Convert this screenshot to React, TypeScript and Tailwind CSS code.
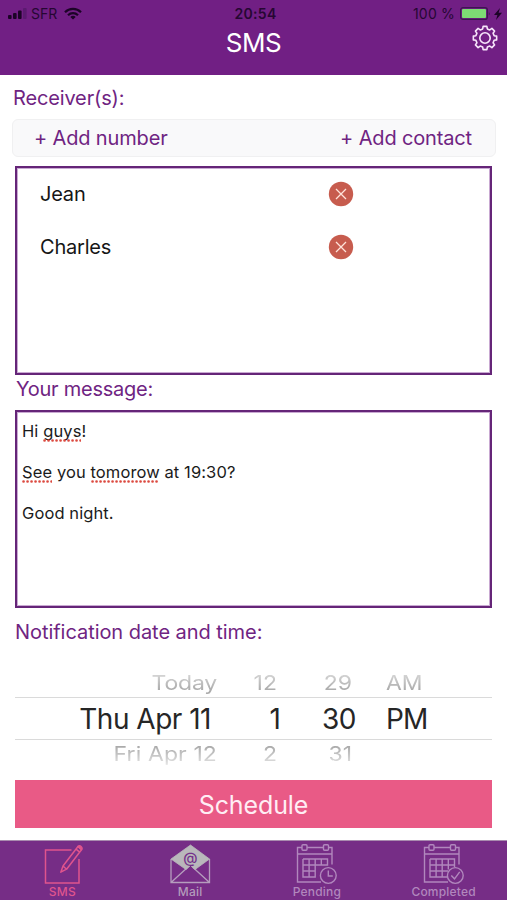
import React from "react";

const contacts = ["Jean", "Charles"];

const GearIcon = () => {
  // eight teeth, each one a flat top joined by slanted flanks
  const points: string[] = [];
  for (let i = 0; i < 8; i++) {
    const mid = (i * Math.PI) / 4;
    [
      [-0.25, 9.4],
      [-0.16, 11.8],
      [0.16, 11.8],
      [0.25, 9.4],
    ].forEach(([offset, r]) => {
      const x = 13 + r * Math.sin(mid + offset);
      const y = 13 - r * Math.cos(mid + offset);
      points.push(`${x.toFixed(2)},${y.toFixed(2)}`);
    });
  }
  return (
    <svg width="26" height="26" viewBox="0 0 26 26" fill="none" stroke="#f7e6fb" strokeWidth="1.6" strokeLinejoin="round">
      <polygon points={points.join(" ")} />
      <circle cx="13" cy="13" r="5.2" />
    </svg>
  );
};

const StatusBar = () => (
  <div className="grid grid-cols-3 items-center h-[27px] pl-[8px] pr-[5px] text-[14px] text-[#260733]">
    <div className="flex items-center">
      <svg width="19" height="11" viewBox="0 0 19 11" fill="#1c0427">
        <rect x="0" y="7" width="3.6" height="4" rx="1" />
        <rect x="5" y="5" width="3.6" height="6" rx="1" />
        <rect x="10" y="2.5" width="3.6" height="8.5" rx="1" />
        <rect x="15" y="0" width="3.6" height="11" rx="1" fill="#5b1a70" />
      </svg>
      <span className="ml-[4px]">SFR</span>
      <svg className="ml-[7px]" width="18" height="13" viewBox="0 0 18 13" fill="none" stroke="#1c0427" strokeWidth="2.2">
        <path d="M1 5.2C5.4.7 12.6.7 17 5.2" />
        <path d="M4 8.3c2.8-2.8 7.2-2.8 10 0" />
        <path d="M9 12.6 6.3 9.9c1.5-1.4 3.9-1.4 5.4 0z" fill="#1c0427" stroke="none" />
      </svg>
    </div>
    <div className="text-center font-semibold text-[14px] tracking-[0.3px] pl-[1px]">20:54</div>
    <div className="flex items-center justify-end">
      <span className="tracking-[0.2px]">100 %</span>
      <svg className="ml-[5px]" width="31" height="13" viewBox="0 0 31 13">
        <rect x="0.6" y="0.6" width="26.8" height="11.8" rx="2.5" fill="none" stroke="#3d1550" strokeWidth="1.2" />
        <rect x="2" y="2" width="24" height="9" rx="1" fill="#7ddb74" />
        <path d="M28.8 4.5q1.6 2 0 4z" fill="#3d1550" />
      </svg>
      <svg className="ml-[3px]" width="8" height="12" viewBox="0 0 8 12" fill="#1c0427">
        <path d="M6 0 0 7h3.4L2 12l6-7.2H4.6z" />
      </svg>
    </div>
  </div>
);

const Header = () => (
  <header className="relative h-[75px] bg-[#711f84]">
    <StatusBar />
    <h1 className="text-center text-[26px] leading-[32px] text-white tracking-[-0.4px]">SMS</h1>
    <button className="absolute right-[9px] top-[25px]"><GearIcon /></button>
  </header>
);

const DeleteButton = () => (
  <button>
    <svg width="26" height="26" viewBox="0 0 26 26">
      <circle cx="13" cy="13" r="12.2" fill="#c75c4e" />
      <path d="M8 8l10 10M18 8 8 18" stroke="#ffe3da" strokeWidth="1.3" fill="none" />
    </svg>
  </button>
);

// Word flagged by the spell checker
const Misspelled = ({ children }: { children: React.ReactNode }) => (
  <span className="relative">
    {children}
    <svg className="absolute left-0 bottom-[-1px] w-full h-[3px]">
      <line x1="1.5" y1="1.5" x2="100%" y2="1.5" stroke="#dc4a40" strokeWidth="2.6" strokeLinecap="round" strokeDasharray="0.1 3.9" />
    </svg>
  </span>
);

const DatePicker = () => (
  <div className="mx-[15px] mt-[23px] h-[99px] overflow-hidden">
    <div className="grid grid-cols-[202px_60px_75px_1fr] h-[29px] items-center text-[23px] leading-[26px] text-[#acacac] [mask-image:linear-gradient(to_bottom,#0006_10%,#000_75%)]">
      <span className="text-right tracking-[-0.2px] scale-y-[0.87]">Today</span>
      <span className="text-right scale-y-[0.87]">12</span>
      <span className="text-right scale-y-[0.87]">29</span>
      <span className="pl-[34px] scale-y-[0.87]">AM</span>
    </div>
    <div className="grid grid-cols-[196px_70px_75px_1fr] h-[43px] items-center border-y border-[#dadada] text-[28px] text-[#262626]">
      <span className="text-right tracking-[-0.5px]">Thu Apr 11</span>
      <span className="text-right">1</span>
      <span className="text-right tracking-[-0.5px]">30</span>
      <span className="pl-[30px] tracking-[-0.8px]">PM</span>
    </div>
    <div className="grid grid-cols-[202px_60px_75px_1fr] h-[27px] items-center text-[23px] leading-[26px] text-[#a8a8a8] [mask-image:linear-gradient(to_bottom,#000_20%,#0005_90%)]">
      <span className="text-right tracking-[0.1px] scale-y-[0.87]">Fri Apr 12</span>
      <span className="text-right scale-y-[0.87]">2</span>
      <span className="text-right scale-y-[0.87]">31</span>
    </div>
  </div>
);

const SmsIcon = () => (
  <svg width="42" height="42" viewBox="0 0 42 42" fill="none" stroke="currentColor" strokeWidth="1.5">
    <path d="M30.5 7H4.5v33H38V16" />
    <path d="M37 3.5 22 23l-2.2 6.2 5.8-3L40.500 6.700zM35 6.200l3.700 3M22 23l3.600 3.200" strokeLinejoin="round" />
    <path d="M37 3.5c1.500-2 5.500 1 3.500 3.200z" fill="currentColor" />
  </svg>
);

const MailIcon = () => (
  <svg width="42" height="42" viewBox="0 0 42 42" fill="none" stroke="#b59dbd" strokeWidth="1.3">
    <path d="M2 16v23.500h38.500V16M2 39.500l17-15.500M40.500 39.500 23.500 24" />
    <path d="M21.500 2 2 16l15 10.500 4.500-4 4.500 4L40.500 16z" fill="#b9b7bb" stroke="#b9b7bb" strokeWidth="0.8" strokeLinejoin="round" />
    <text x="21.3" y="19.500" textAnchor="middle" fontSize="14.5" fontWeight="500" fill="#74308a" stroke="none">@</text>
  </svg>
);

const CalendarIcon = ({ done = false }: { done?: boolean }) => (
  <svg width="42" height="42" viewBox="0 0 42 42" fill="none" stroke="#b187bd" strokeWidth="1.4">
    <path d="M6 4.500H1.500V39H25M11 4.500h16.500M32.500 4.500H36v17M1.500 11H36" />
    <rect x="6" y="1.700" width="5" height="5.500" rx="1" />
    <rect x="27.500" y="1.700" width="5" height="5.500" rx="1" />
    {done ? (
      <path d="M7 16h24.500v8M7 16v18h18M7 22h24.500M7 28H25M13.100 16v18M19.200 16v18M25.300 16v10.500" />
    ) : (
      <path d="M7 16h24.500v6H7M7 16v18h12.200V16M7 28h12.200M13.100 16v18M25.300 16v6" />
    )}
    <circle cx="32.300" cy="32.500" r="7.900" fill="#762d86" />
    {done ? <path d="m28.300 32.500 3.200 3.300 5.200-7" /> : <path d="M32.300 27.500V33h4.500" />}
  </svg>
);

const tabs = [
  { label: "SMS", icon: <SmsIcon />, color: "text-[#df548d] pr-[2px]" },
  { label: "Mail", icon: <MailIcon />, color: "text-[#b39bbb]" },
  { label: "Pending", icon: <CalendarIcon />, color: "text-[#b187bd]" },
  { label: "Completed", icon: <CalendarIcon done />, color: "text-[#b187bd]" },
];

const TabBar = () => (
  <nav className="mt-[12px] h-[60px] border-t border-[#a98caf] bg-[#762d86] grid grid-cols-4">
    {tabs.map((tab) => (
      <a key={tab.label} href="#" className={`flex flex-col items-center pt-[2px] ${tab.color}`}>
        {tab.icon}
        <span className="text-[12px] leading-[14px] font-medium tracking-[0.2px] whitespace-nowrap">{tab.label}</span>
      </a>
    ))}
  </nav>
);

export default function App() {
  return (
    <div className="w-[507px] h-[900px] overflow-hidden bg-white font-['Inter','Liberation_Sans',sans-serif] text-[#6f2482]">
      <Header />

      {/* Receivers */}
      <h2 className="pl-[13px] pt-[9px] h-[44px] text-[20px] leading-[28px] tracking-[-0.15px]">Receiver(s):</h2>
      <div className="ml-[12px] mr-[11px] h-[38px] flex items-center justify-between pl-[21px] pr-[23px] rounded-md border border-[#f0f0f1] bg-[#f9f9fa] text-[20px] tracking-[-0.15px]">
        <button>+ Add number</button>
        <button>+ Add contact</button>
      </div>
      <ul className="mx-[15px] mt-[9px] h-[209px] border-2 border-[#652578] shadow-[inset_0_0_0_1px_#c9a9d2] text-[20px] text-[#161616]">
        {contacts.map((name) => (
          <li key={name} className="flex h-[52.5px] items-center pl-[23px]">
            <span className="w-[288px] tracking-[-0.2px]">{name}</span>
            <DeleteButton />
          </li>
        ))}
      </ul>

      {/* Message */}
      <h2 className="pl-[16px] h-[35px] pt-[1px] text-[20px] leading-[27px] tracking-[-0.25px]">Your message:</h2>
      <div className="mx-[15px] h-[198px] border-2 border-[#652578] shadow-[inset_0_0_0_1px_#c9a9d2] pl-[5px] pt-[9px] text-[16.5px] tracking-[0.1px] leading-[20.5px] text-[#1b1b1b]">
        <p>Hi <Misspelled>guys</Misspelled>!</p>
        <br />
        <p><Misspelled>See</Misspelled> you <Misspelled>tomorow</Misspelled> at 19:30?</p>
        <br />
        <p>Good night.</p>
      </div>

      {/* Schedule */}
      <h2 className="pl-[15px] pt-[10px] h-[37px] text-[20px] leading-[28px] tracking-[-0.05px]">Notification date and time:</h2>
      <DatePicker />
      <button className="block w-[477px] ml-[15px] mt-[13px] h-[48px] bg-[#e95a86] text-[25px] leading-[50px] text-[#ffeef4] tracking-[-0.1px]">Schedule</button>

      <TabBar />
    </div>
  );
}
